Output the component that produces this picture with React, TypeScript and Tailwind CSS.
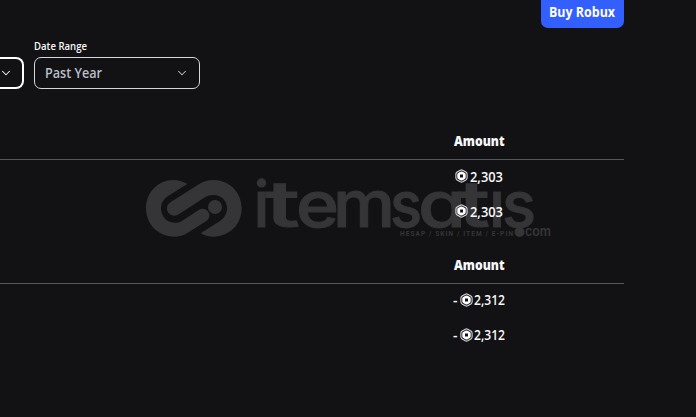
import React from 'react';
import { ChevronDown } from 'lucide-react';

interface Transaction {
  id: number;
  amount: string;
  negative?: boolean;
}

const incoming: Transaction[] = [
  { id: 1, amount: '2,303' },
  { id: 2, amount: '2,303' },
];

const outgoing: Transaction[] = [
  { id: 3, amount: '2,312', negative: true },
  { id: 4, amount: '2,312', negative: true },
];

// letter, left edge, width
const wordmark: [string, number, number][] = [
  ['i', 253.5, 16],
  ['t', 265, 35],
  ['e', 296, 43],
  ['m', 333, 62],
  ['s', 390, 32],
  ['a', 418, 48],
  ['t', 458, 32],
  ['ı', 489, 16],
  ['s', 502, 34],
];

// Text condensed to a fixed width
const Label: React.FC<{ width: number; size?: number; children: string }> = ({ width, size = 13.5, children }) => (
  <svg width={width + 1} height="20" className="shrink-0 overflow-visible" fill="currentColor">
    <text x="0" y="15" fontSize={size} textLength={width} lengthAdjust="spacingAndGlyphs">{children}</text>
  </svg>
);

const RobuxIcon: React.FC = () => (
  <svg width="13" height="14" viewBox="0 0 13 14" fill="none" className="shrink-0">
    <path d="M5.3 1.2Q6.5 .6 7.7 1.2L10.9 3Q12.1 3.8 12.1 5V9Q12.1 10.2 10.9 11L7.7 12.8Q6.5 13.4 5.3 12.8L2.1 11Q.9 10.2 .9 9V5Q.9 3.8 2.1 3Z" stroke="#d4d4d8" strokeWidth="1.1" />
    <path fillRule="evenodd" d="M6.5 2.4Q7 2.4 7.6 2.7L9.8 4Q10.7 4.5 10.7 5.4V8.6Q10.7 9.5 9.8 10L7.6 11.3Q6.5 11.9 5.4 11.3L3.2 10Q2.3 9.5 2.3 8.6V5.4Q2.3 4.5 3.2 4L5.4 2.7Q6 2.4 6.5 2.4ZM5 5.5V8.5H8V5.5Z" fill="#fff" />
  </svg>
);

const Watermark: React.FC = () => (
  <svg
    width="410"
    height="70"
    viewBox="144 173 410 70"
    className="pointer-events-none absolute left-[144px] top-[173px] z-0 overflow-visible"
    fill="#353537"
  >
    <g transform="translate(130 165) scale(.33333)">
      <path d="M172 57C158 49 146 45 130 45C84 45 48 83 48 130C48 178 85 215 133 215C148 215 160 212 172 204L228 169C238 162 241 151 235 141C228 131 216 129 206 135L157 167C150 172 142 173 133 173C110 173 93 154 93 130C93 115 100 102 114 93Z" />
      <path d="M212 205C223 212 236 215 250 215C298 215 335 178 335 130C335 82 298 45 250 45C234 45 221 49 208 57L121 112C111 119 108 132 114 142C121 153 134 155 144 149L225 97C233 92 241 90 250 90C274 90 291 107 291 130C291 147 283 159 270 168Z" />
      <circle cx="255" cy="126" r="21" />
    </g>
    <g className="font-['Inter','Lato',sans-serif] font-medium [font-feature-settings:'cv11']" stroke="#353537" strokeWidth="1">
      {wordmark.map(([letter, x, width], i) => (
        <text key={i} x={x} y="226.5" fontSize="64" textLength={width} lengthAdjust="spacingAndGlyphs">{letter}</text>
      ))}
    </g>
    {/* round cedilla that doubles as the dot of ".com" */}
    <circle cx="519.5" cy="232" r="5" />
    <text x="525" y="236" fontSize="13" textLength="26" lengthAdjust="spacingAndGlyphs" className="font-['Inter',sans-serif] font-semibold">com</text>
    <text x="400" y="235.5" fontSize="6.5" textLength="113" className="font-['Roboto',sans-serif] font-bold">HESAP / SKIN / ITEM / E-PIN</text>
  </svg>
);

const AmountTable: React.FC<{ rows: Transaction[] }> = ({ rows }) => (
  <section className="w-[624px]">
    <div className="flex h-[36px] border-b border-[#55565c] pl-[453.5px] pt-[7px] font-extrabold">
      <Label width={50.5}>Amount</Label>
    </div>
    <div className="-mt-[2px] mb-[2px]">
      {rows.map(row => (
        <div key={row.id} className="flex h-[35px] items-center pl-[453px] text-[14px] font-semibold">
          {row.negative ? <span className="w-[6.5px]">-</span> : <span className="w-[2px]" />}
          <RobuxIcon />
          <span className={row.negative ? 'ml-[1.5px]' : 'ml-[2px] mt-[2px]'}>
            <Label width={row.negative ? 31 : 33}>{row.amount}</Label>
          </span>
        </div>
      ))}
    </div>
  </section>
);

const App: React.FC = () => {
  return (
    <main className="relative h-[417px] w-[696px] overflow-hidden bg-[#121214] font-['Open_Sans','Liberation_Sans',sans-serif] text-[#f7f7f8]">
      <Watermark />
      <div className="relative z-10">
        <header className="flex h-7 w-[624px] justify-end">
          <button className="flex h-7 w-[83px] justify-center rounded-b-[7px] bg-[#335fff] pt-[2px] font-bold text-white">
            <Label width={66}>Buy Robux</Label>
          </button>
        </header>

        <div className="flex h-[61px] items-end gap-[10px]">
          <button className="flex h-8 w-6 items-center justify-end rounded-r-lg border-2 border-l-0 border-white pr-[9px]">
            <ChevronDown size={14} strokeWidth={1.8} className="shrink-0" />
          </button>
          <div>
            <label className="mb-[2px] block font-semibold">
              <Label width={53} size={10.5}>Date Range</Label>
            </label>
            <button className="flex h-8 w-[166px] items-center justify-between rounded-[7px] border border-[#d5d7dd] px-[10px] font-semibold text-[#bcbec8]">
              <Label width={57}>Past Year</Label>
              <ChevronDown size={14} strokeWidth={1.8} />
            </button>
          </div>
        </div>

        <div className="mt-[35px] flex flex-col gap-[18px]">
          <AmountTable rows={incoming} />
          <AmountTable rows={outgoing} />
        </div>
      </div>
    </main>
  );
};

export default App;
